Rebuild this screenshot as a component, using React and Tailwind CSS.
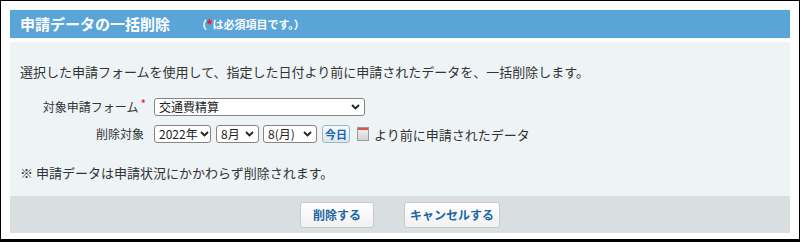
import { useState } from "react";

function Chevron() {
  return (
    <svg width="9" height="6" viewBox="0 0 9 6" className="shrink-0">
      <polyline
        points="1,1 4.5,4.5 8,1"
        fill="none"
        stroke="#222"
        strokeWidth="1.8"
      />
    </svg>
  );
}

function FakeSelect({ value, className }) {
  return (
    <div
      className={
        "flex h-[18px] shrink-0 items-center justify-between gap-[2px] whitespace-nowrap rounded-[3px] border border-[#858585] bg-white pl-[4px] pr-[4px] text-[12px] leading-none text-[#222] " +
        className
      }
    >
      <span className="whitespace-nowrap">{value}</span>
      <Chevron />
    </div>
  );
}

function CalendarIcon() {
  return (
    <div className="flex h-[14px] w-[12px] flex-col border border-[#9a9a9a] bg-gradient-to-b from-[#f2f2f2] to-[#d4d4d4]">
      <div className="h-[2px] w-full bg-[#d9534f]" />
    </div>
  );
}

function FooterButton({ label, className }) {
  return (
    <button
      className={
        "flex h-[26px] items-center justify-center rounded-[3px] border border-[#c5cacd] bg-gradient-to-b from-white to-[#f1f1f1] text-[12px] font-bold text-[#1d67a5] " +
        className
      }
    >
      {label}
    </button>
  );
}

export default function App() {
  const [form] = useState("交通費精算");

  return (
    <div className="h-[242px] w-[800px] border border-b-[3px] border-black bg-white px-[9px] pb-[6px] pt-[9px] font-['Noto_Sans_CJK_JP',sans-serif]">
      <div className="flex flex-col">
        {/* header */}
        <div className="flex h-[28px] items-center bg-[#5aa5d8] pl-[10px] text-white">
          <span className="text-[15px] font-bold">申請データの一括削除</span>
          <span className="ml-[26px] flex items-center text-[11px] font-bold leading-none">
            （
            <span className="font-['Liberation_Sans',sans-serif] text-[14px] text-[#e8202a]">
              *
            </span>
            は必須項目です。）
          </span>
        </div>

        {/* body */}
        <div className="mt-[4px] flex h-[154px] flex-col bg-[#eef3f6] px-[10px] pt-[20px] text-[#333]">
          <p className="text-[13px] leading-[20px]">
            選択した申請フォームを使用して、指定した日付より前に申請されたデータを、一括削除します。
          </p>

          <div className="mt-[16px] flex flex-col gap-[9px]">
            <div className="flex items-center">
              <div className="w-[126px] text-right text-[12px] leading-none">
                対象申請フォーム
                <span className="relative -top-[3px] ml-[2px] text-[#e8202a]">*</span>
              </div>
              <FakeSelect value={form} className="ml-[8px] w-[211px]" />
            </div>

            <div className="flex items-center">
              <div className="w-[124px] text-right text-[12px] leading-none">
                削除対象
              </div>
              <div className="ml-[10px] flex items-center">
                <FakeSelect value="2022年" className="w-[57px]" />
                <FakeSelect value="8月" className="ml-[5px] w-[43px]" />
                <FakeSelect value="8(月)" className="ml-[4px] w-[54px]" />
                <button className="ml-[5px] flex h-[18px] w-[28px] items-center justify-center rounded-[3px] border border-[#9fb5ca] bg-gradient-to-b from-[#f7fafc] to-[#dbe6ef] text-[11px] font-bold leading-none text-[#1a63ad]">
                  今日
                </button>
                <div className="ml-[7px]">
                  <CalendarIcon />
                </div>
                <span className="ml-[5px] whitespace-nowrap text-[13px] leading-none">
                  より前に申請されたデータ
                </span>
              </div>
            </div>
          </div>

          <p className="mt-[20px] text-[13px] leading-[20px]">
            ※ 申請データは申請状況にかかわらず削除されます。
          </p>
        </div>

        {/* footer */}
        <div className="flex h-[37px] items-start justify-center gap-[30px] bg-[#d9dee1] pt-[6px]">
          <FooterButton label="削除する" className="w-[74px]" />
          <FooterButton label="キャンセルする" className="w-[96px]" />
        </div>
      </div>
    </div>
  );
}
